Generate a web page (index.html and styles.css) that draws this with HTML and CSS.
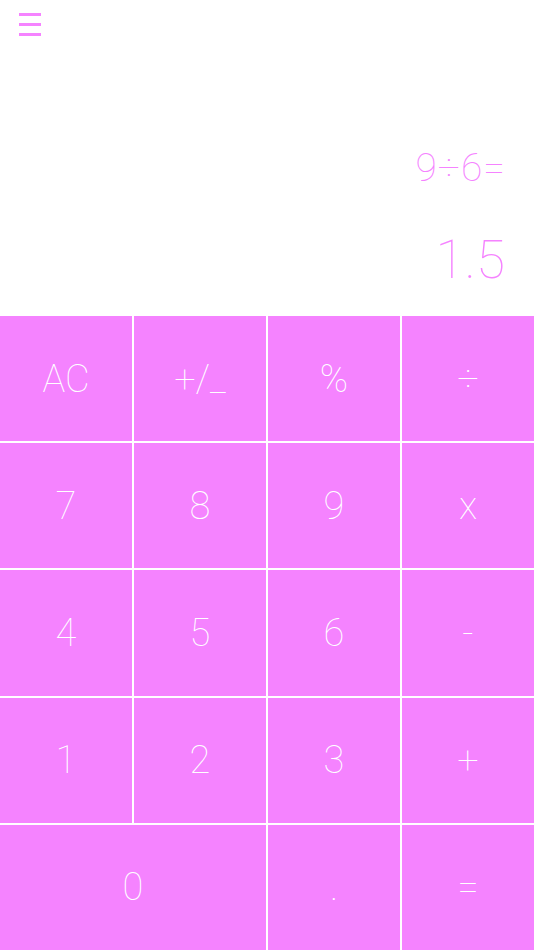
FILE: index.html
```html
<!DOCTYPE html>
<html lang="en">
<head>
    <meta charset="UTF-8">
    <meta name="viewport" content="width=device-width, initial-scale=1.0">
    <title>Calculator</title>
    <link rel="stylesheet" href="styles.css">
</head>
<body>
    <div class="calculator">
        <div class="display">
            <button class="menu" aria-label="Menu">
                <span></span>
                <span></span>
                <span></span>
            </button>
            <div class="expression">9÷6=</div>
            <div class="result">1.5</div>
        </div>
        <div class="keys">
            <button class="key">AC</button>
            <button class="key">+/_</button>
            <button class="key">%</button>
            <button class="key">÷</button>
            <button class="key">7</button>
            <button class="key">8</button>
            <button class="key">9</button>
            <button class="key">x</button>
            <button class="key">4</button>
            <button class="key">5</button>
            <button class="key">6</button>
            <button class="key">-</button>
            <button class="key">1</button>
            <button class="key">2</button>
            <button class="key">3</button>
            <button class="key">+</button>
            <button class="key wide">0</button>
            <button class="key">.</button>
            <button class="key">=</button>
        </div>
    </div>
</body>
</html>
```

FILE: styles.css
```css
body, html {
    margin: 0;
    padding: 0;
    width: 100%;
    height: 100%;
    overflow: hidden;
    font-family: Roboto, "Liberation Sans", sans-serif;
    background-color: #fff;
}

.calculator {
    display: flex;
    flex-direction: column;
    height: 100%;
}

.display {
    height: 316px;
    display: flex;
    flex-direction: column;
    align-items: flex-end;
    padding: 0 29px 0 0;
    box-sizing: border-box;
    color: #f583ff;
}

.menu {
    align-self: flex-start;
    display: flex;
    flex-direction: column;
    gap: 7px;
    background: none;
    border: none;
    padding: 0;
    margin: 13px 0 0 19px;
    cursor: pointer;
}

.menu span {
    display: block;
    width: 22px;
    height: 3px;
    background-color: #f583ff;
}

.expression {
    margin-top: 110px;
    font-size: 39px;
    font-weight: 100;
    line-height: 44px;
    letter-spacing: 1px;
    margin-right: -1px;
}

.result {
    margin-top: 40px;
    font-size: 53px;
    font-weight: 100;
    line-height: 60px;
}

.keys {
    flex: 1;
    display: grid;
    grid-template-columns: repeat(4, 1fr);
    grid-template-rows: repeat(5, 1fr);
    gap: 2px;
    background-color: #fff;
}

.key {
    background-color: #f583ff;
    border: none;
    color: #fff;
    font-family: inherit;
    font-size: 38px;
    font-weight: 100;
    cursor: pointer;
    padding: 0;
}

.key.wide {
    grid-column: span 2;
}

.key:active {
    background-color: #e96cf5;
}
```
